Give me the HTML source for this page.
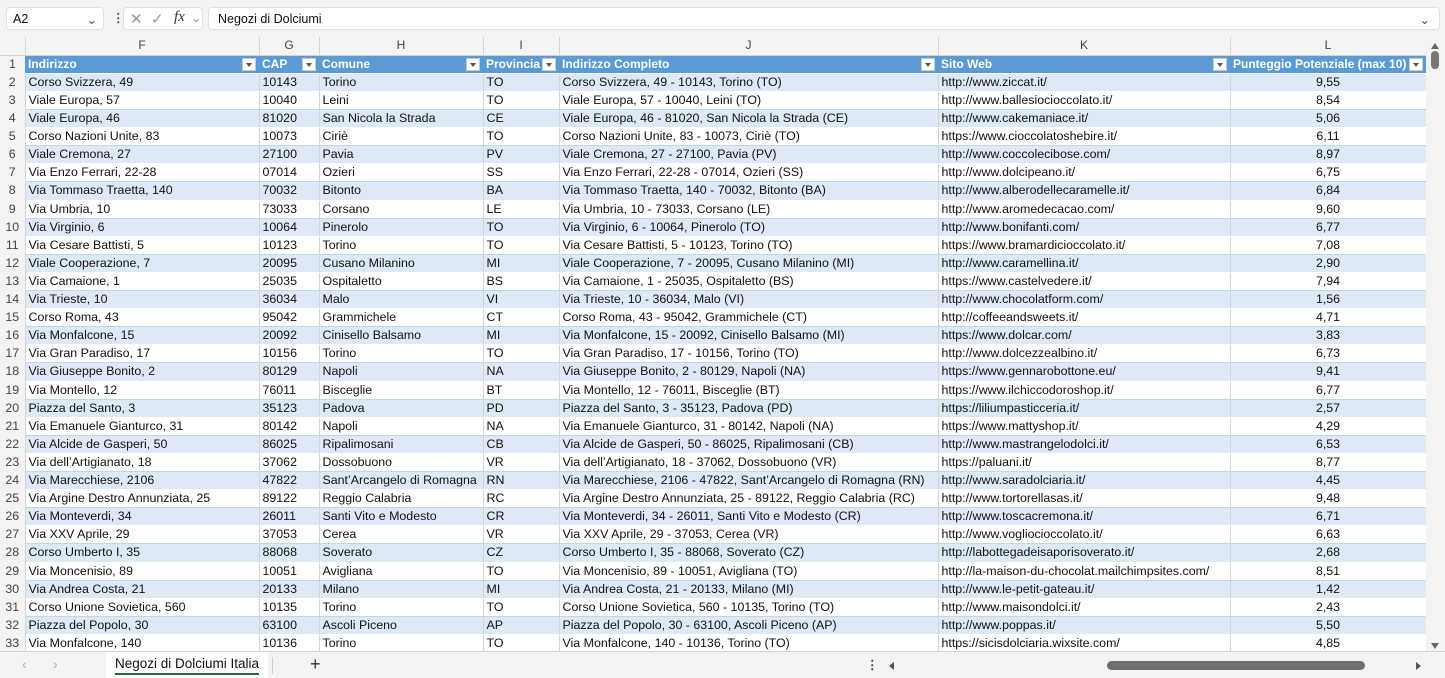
<!DOCTYPE html>
<html><head><meta charset="utf-8"><style>
*{box-sizing:border-box;margin:0;padding:0}
body{width:1445px;height:677px;background:#f3f3f3;font-family:"Liberation Sans",Arial,sans-serif;font-size:12.4px;color:#111;position:relative;overflow:hidden}
.top{position:absolute;left:0;top:0;width:1445px;height:37px;background:#f3f3f3}
.nb{position:absolute;left:6px;top:7px;width:98px;height:23px;background:#fff;border:1px solid #e0e0e0;border-radius:4px;padding:4px 6px;font-size:12.5px}
.fx{position:absolute;left:123px;top:7px;width:80px;height:23px;background:#fff;border:1px solid #e0e0e0;border-radius:4px;color:#999}
.fb{position:absolute;left:208px;top:7px;width:1232px;height:23px;background:#fff;border:1px solid #e0e0e0;border-radius:4px;padding:4px 9px;font-size:12.5px}
.grid{position:absolute;left:0;top:37px;height:614px;overflow:hidden}
table{border-collapse:collapse;table-layout:fixed}
td{height:18px;padding:0 3px;white-space:nowrap;overflow:hidden;border-right:1px solid #d4d4d4;border-bottom:1px solid #fff;line-height:17px}
tr.t td{height:19px}
tr.ch td{height:18px;background:#f3f3f3;text-align:center;color:#444;border-bottom:1px solid #d4d4d4;font-size:12px}
td.rh{background:#f3f3f3;color:#444;text-align:center;padding:0;border-right:1px solid #d4d4d4;border-bottom:none}
tr.h td{background:#5b9bd5;color:#fff;font-weight:bold;border-right:none;position:relative;font-size:12px}
tr.h td.rh{background:#f3f3f3;color:#444;font-weight:normal}
tr.b td{background:#dde9f6;border-bottom:1px solid #fff}
tr.w td{background:#fff;border-bottom:1px solid #bdd7ee}
tr.b td.rh,tr.w td.rh{background:#f3f3f3;border-bottom:none}
.dd{position:absolute;right:3px;top:2px;width:14px;height:13px;background:#fff;border:1px solid #ccc}
.dd:after{content:"";position:absolute;left:3px;top:4px;border:3.5px solid transparent;border-top:4px solid #555}
td.r{text-align:center}
.sb{position:absolute;left:1426px;top:37px;width:19px;height:613px;background:#f3f3f3}
.tabs{position:absolute;left:0;top:651px;width:1445px;height:26px;background:#f3f3f3;border-top:1px solid #d4d4d4}
.tab{position:absolute;left:106px;top:0;width:162px;height:26px;background:#fff;padding-top:4px;text-align:center;font-size:13.5px}
.tab span{border-bottom:2px solid #1e7145;padding-bottom:2px}
</style></head><body>
<div class="top">
<div class="nb">A2<span style="float:right;color:#555">&#8964;</span></div>
<div style="position:absolute;left:112px;top:10px;color:#555;font-weight:bold">&#8942;</div>
<div class="fx"><span style="position:absolute;left:6px;top:2px;font-size:15px">✕</span><span style="position:absolute;left:27px;top:2px;font-size:15px">✓</span><span style="position:absolute;left:50px;top:1px;font-family:'Liberation Serif';font-style:italic;font-size:15px;color:#333">fx</span><span style="position:absolute;left:67px;top:2px">&#8964;</span></div>
<div class="fb">Negozi di Dolciumi<span style="float:right;color:#555">&#8964;</span></div>
</div>
<div class="grid"><table>
<colgroup><col style="width:25px"><col style="width:234px"><col style="width:60px"><col style="width:164px"><col style="width:76px"><col style="width:379px"><col style="width:292px"><col style="width:196px"></colgroup>
<tr class="ch"><td class="rh"></td><td>F</td><td>G</td><td>H</td><td>I</td><td>J</td><td>K</td><td>L</td></tr>
<tr class="h"><td class="rh">1</td><td>Indirizzo<i class="dd"></i></td><td>CAP<i class="dd"></i></td><td>Comune<i class="dd"></i></td><td>Provincia<i class="dd"></i></td><td>Indirizzo Completo<i class="dd"></i></td><td>Sito Web<i class="dd"></i></td><td>Punteggio Potenziale (max 10)<i class="dd"></i></td></tr>
<tr class="b"><td class="rh">2</td><td>Corso Svizzera, 49</td><td>10143</td><td>Torino</td><td>TO</td><td>Corso Svizzera, 49 - 10143, Torino (TO)</td><td>http://www.ziccat.it/</td><td class="r">9,55</td></tr>
<tr class="w"><td class="rh">3</td><td>Viale Europa, 57</td><td>10040</td><td>Leini</td><td>TO</td><td>Viale Europa, 57 - 10040, Leini (TO)</td><td>http://www.ballesiocioccolato.it/</td><td class="r">8,54</td></tr>
<tr class="b"><td class="rh">4</td><td>Viale Europa, 46</td><td>81020</td><td>San Nicola la Strada</td><td>CE</td><td>Viale Europa, 46 - 81020, San Nicola la Strada (CE)</td><td>http://www.cakemaniace.it/</td><td class="r">5,06</td></tr>
<tr class="w"><td class="rh">5</td><td>Corso Nazioni Unite, 83</td><td>10073</td><td>Ciriè</td><td>TO</td><td>Corso Nazioni Unite, 83 - 10073, Ciriè (TO)</td><td>https://www.cioccolatoshebire.it/</td><td class="r">6,11</td></tr>
<tr class="b"><td class="rh">6</td><td>Viale Cremona, 27</td><td>27100</td><td>Pavia</td><td>PV</td><td>Viale Cremona, 27 - 27100, Pavia (PV)</td><td>http://www.coccolecibose.com/</td><td class="r">8,97</td></tr>
<tr class="w"><td class="rh">7</td><td>Via Enzo Ferrari, 22-28</td><td>07014</td><td>Ozieri</td><td>SS</td><td>Via Enzo Ferrari, 22-28 - 07014, Ozieri (SS)</td><td>http://www.dolcipeano.it/</td><td class="r">6,75</td></tr>
<tr class="b t"><td class="rh">8</td><td>Via Tommaso Traetta, 140</td><td>70032</td><td>Bitonto</td><td>BA</td><td>Via Tommaso Traetta, 140 - 70032, Bitonto (BA)</td><td>http://www.alberodellecaramelle.it/</td><td class="r">6,84</td></tr>
<tr class="w"><td class="rh">9</td><td>Via Umbria, 10</td><td>73033</td><td>Corsano</td><td>LE</td><td>Via Umbria, 10 - 73033, Corsano (LE)</td><td>http://www.aromedecacao.com/</td><td class="r">9,60</td></tr>
<tr class="b"><td class="rh">10</td><td>Via Virginio, 6</td><td>10064</td><td>Pinerolo</td><td>TO</td><td>Via Virginio, 6 - 10064, Pinerolo (TO)</td><td>http://www.bonifanti.com/</td><td class="r">6,77</td></tr>
<tr class="w"><td class="rh">11</td><td>Via Cesare Battisti, 5</td><td>10123</td><td>Torino</td><td>TO</td><td>Via Cesare Battisti, 5 - 10123, Torino (TO)</td><td>https://www.bramardicioccolato.it/</td><td class="r">7,08</td></tr>
<tr class="b"><td class="rh">12</td><td>Viale Cooperazione, 7</td><td>20095</td><td>Cusano Milanino</td><td>MI</td><td>Viale Cooperazione, 7 - 20095, Cusano Milanino (MI)</td><td>http://www.caramellina.it/</td><td class="r">2,90</td></tr>
<tr class="w"><td class="rh">13</td><td>Via Camaione, 1</td><td>25035</td><td>Ospitaletto</td><td>BS</td><td>Via Camaione, 1 - 25035, Ospitaletto (BS)</td><td>https://www.castelvedere.it/</td><td class="r">7,94</td></tr>
<tr class="b"><td class="rh">14</td><td>Via Trieste, 10</td><td>36034</td><td>Malo</td><td>VI</td><td>Via Trieste, 10 - 36034, Malo (VI)</td><td>http://www.chocolatform.com/</td><td class="r">1,56</td></tr>
<tr class="w"><td class="rh">15</td><td>Corso Roma, 43</td><td>95042</td><td>Grammichele</td><td>CT</td><td>Corso Roma, 43 - 95042, Grammichele (CT)</td><td>http://coffeeandsweets.it/</td><td class="r">4,71</td></tr>
<tr class="b"><td class="rh">16</td><td>Via Monfalcone, 15</td><td>20092</td><td>Cinisello Balsamo</td><td>MI</td><td>Via Monfalcone, 15 - 20092, Cinisello Balsamo (MI)</td><td>https://www.dolcar.com/</td><td class="r">3,83</td></tr>
<tr class="w"><td class="rh">17</td><td>Via Gran Paradiso, 17</td><td>10156</td><td>Torino</td><td>TO</td><td>Via Gran Paradiso, 17 - 10156, Torino (TO)</td><td>http://www.dolcezzealbino.it/</td><td class="r">6,73</td></tr>
<tr class="b t"><td class="rh">18</td><td>Via Giuseppe Bonito, 2</td><td>80129</td><td>Napoli</td><td>NA</td><td>Via Giuseppe Bonito, 2 - 80129, Napoli (NA)</td><td>https://www.gennarobottone.eu/</td><td class="r">9,41</td></tr>
<tr class="w"><td class="rh">19</td><td>Via Montello, 12</td><td>76011</td><td>Bisceglie</td><td>BT</td><td>Via Montello, 12 - 76011, Bisceglie (BT)</td><td>https://www.ilchiccodoroshop.it/</td><td class="r">6,77</td></tr>
<tr class="b"><td class="rh">20</td><td>Piazza del Santo, 3</td><td>35123</td><td>Padova</td><td>PD</td><td>Piazza del Santo, 3 - 35123, Padova (PD)</td><td>https://liliumpasticceria.it/</td><td class="r">2,57</td></tr>
<tr class="w"><td class="rh">21</td><td>Via Emanuele Gianturco, 31</td><td>80142</td><td>Napoli</td><td>NA</td><td>Via Emanuele Gianturco, 31 - 80142, Napoli (NA)</td><td>https://www.mattyshop.it/</td><td class="r">4,29</td></tr>
<tr class="b"><td class="rh">22</td><td>Via Alcide de Gasperi, 50</td><td>86025</td><td>Ripalimosani</td><td>CB</td><td>Via Alcide de Gasperi, 50 - 86025, Ripalimosani (CB)</td><td>http://www.mastrangelodolci.it/</td><td class="r">6,53</td></tr>
<tr class="w"><td class="rh">23</td><td>Via dell’Artigianato, 18</td><td>37062</td><td>Dossobuono</td><td>VR</td><td>Via dell’Artigianato, 18 - 37062, Dossobuono (VR)</td><td>https://paluani.it/</td><td class="r">8,77</td></tr>
<tr class="b"><td class="rh">24</td><td>Via Marecchiese, 2106</td><td>47822</td><td>Sant’Arcangelo di Romagna</td><td>RN</td><td>Via Marecchiese, 2106 - 47822, Sant’Arcangelo di Romagna (RN)</td><td>http://www.saradolciaria.it/</td><td class="r">4,45</td></tr>
<tr class="w"><td class="rh">25</td><td>Via Argine Destro Annunziata, 25</td><td>89122</td><td>Reggio Calabria</td><td>RC</td><td>Via Argine Destro Annunziata, 25 - 89122, Reggio Calabria (RC)</td><td>http://www.tortorellasas.it/</td><td class="r">9,48</td></tr>
<tr class="b"><td class="rh">26</td><td>Via Monteverdi, 34</td><td>26011</td><td>Santi Vito e Modesto</td><td>CR</td><td>Via Monteverdi, 34 - 26011, Santi Vito e Modesto (CR)</td><td>http://www.toscacremona.it/</td><td class="r">6,71</td></tr>
<tr class="w"><td class="rh">27</td><td>Via XXV Aprile, 29</td><td>37053</td><td>Cerea</td><td>VR</td><td>Via XXV Aprile, 29 - 37053, Cerea (VR)</td><td>http://www.vogliocioccolato.it/</td><td class="r">6,63</td></tr>
<tr class="b t"><td class="rh">28</td><td>Corso Umberto I, 35</td><td>88068</td><td>Soverato</td><td>CZ</td><td>Corso Umberto I, 35 - 88068, Soverato (CZ)</td><td>http://labottegadeisaporisoverato.it/</td><td class="r">2,68</td></tr>
<tr class="w"><td class="rh">29</td><td>Via Moncenisio, 89</td><td>10051</td><td>Avigliana</td><td>TO</td><td>Via Moncenisio, 89 - 10051, Avigliana (TO)</td><td>http://la-maison-du-chocolat.mailchimpsites.com/</td><td class="r">8,51</td></tr>
<tr class="b"><td class="rh">30</td><td>Via Andrea Costa, 21</td><td>20133</td><td>Milano</td><td>MI</td><td>Via Andrea Costa, 21 - 20133, Milano (MI)</td><td>http://www.le-petit-gateau.it/</td><td class="r">1,42</td></tr>
<tr class="w"><td class="rh">31</td><td>Corso Unione Sovietica, 560</td><td>10135</td><td>Torino</td><td>TO</td><td>Corso Unione Sovietica, 560 - 10135, Torino (TO)</td><td>http://www.maisondolci.it/</td><td class="r">2,43</td></tr>
<tr class="b"><td class="rh">32</td><td>Piazza del Popolo, 30</td><td>63100</td><td>Ascoli Piceno</td><td>AP</td><td>Piazza del Popolo, 30 - 63100, Ascoli Piceno (AP)</td><td>http://www.poppas.it/</td><td class="r">5,50</td></tr>
<tr class="w"><td class="rh">33</td><td>Via Monfalcone, 140</td><td>10136</td><td>Torino</td><td>TO</td><td>Via Monfalcone, 140 - 10136, Torino (TO)</td><td>https://sicisdolciaria.wixsite.com/</td><td class="r">4,85</td></tr>
</table></div>
<div class="sb"><div style="position:absolute;left:5px;top:6px;border:4px solid transparent;border-bottom:6px solid #666;border-top:none"></div><div style="position:absolute;left:5px;top:14px;width:8px;height:18px;background:#777;border-radius:4px"></div><div style="position:absolute;left:5px;top:606px;border:4px solid transparent;border-top:6px solid #666;border-bottom:none"></div></div>
<div class="tabs">
<span style="position:absolute;left:22px;top:4px;color:#aaa;font-size:14px">&#8249;</span>
<span style="position:absolute;left:53px;top:4px;color:#aaa;font-size:14px">&#8250;</span>
<div class="tab"><span>Negozi di Dolciumi Italia</span></div>
<div style="position:absolute;left:272px;top:5px;width:1px;height:17px;background:#ccc"></div>
<span style="position:absolute;left:310px;top:2px;font-size:18px;color:#333">+</span>
<span style="position:absolute;left:866px;top:5px;font-weight:bold;color:#444">&#8942;</span>
<div style="position:absolute;left:889px;top:10px;border:4px solid transparent;border-right:5px solid #555;border-left:none"></div>
<div style="position:absolute;left:1107px;top:9px;width:258px;height:9px;background:#6e6e6e;border-radius:5px"></div>
<div style="position:absolute;left:1416px;top:10px;border:4px solid transparent;border-left:5px solid #555;border-right:none"></div>
</div>
</body></html>
